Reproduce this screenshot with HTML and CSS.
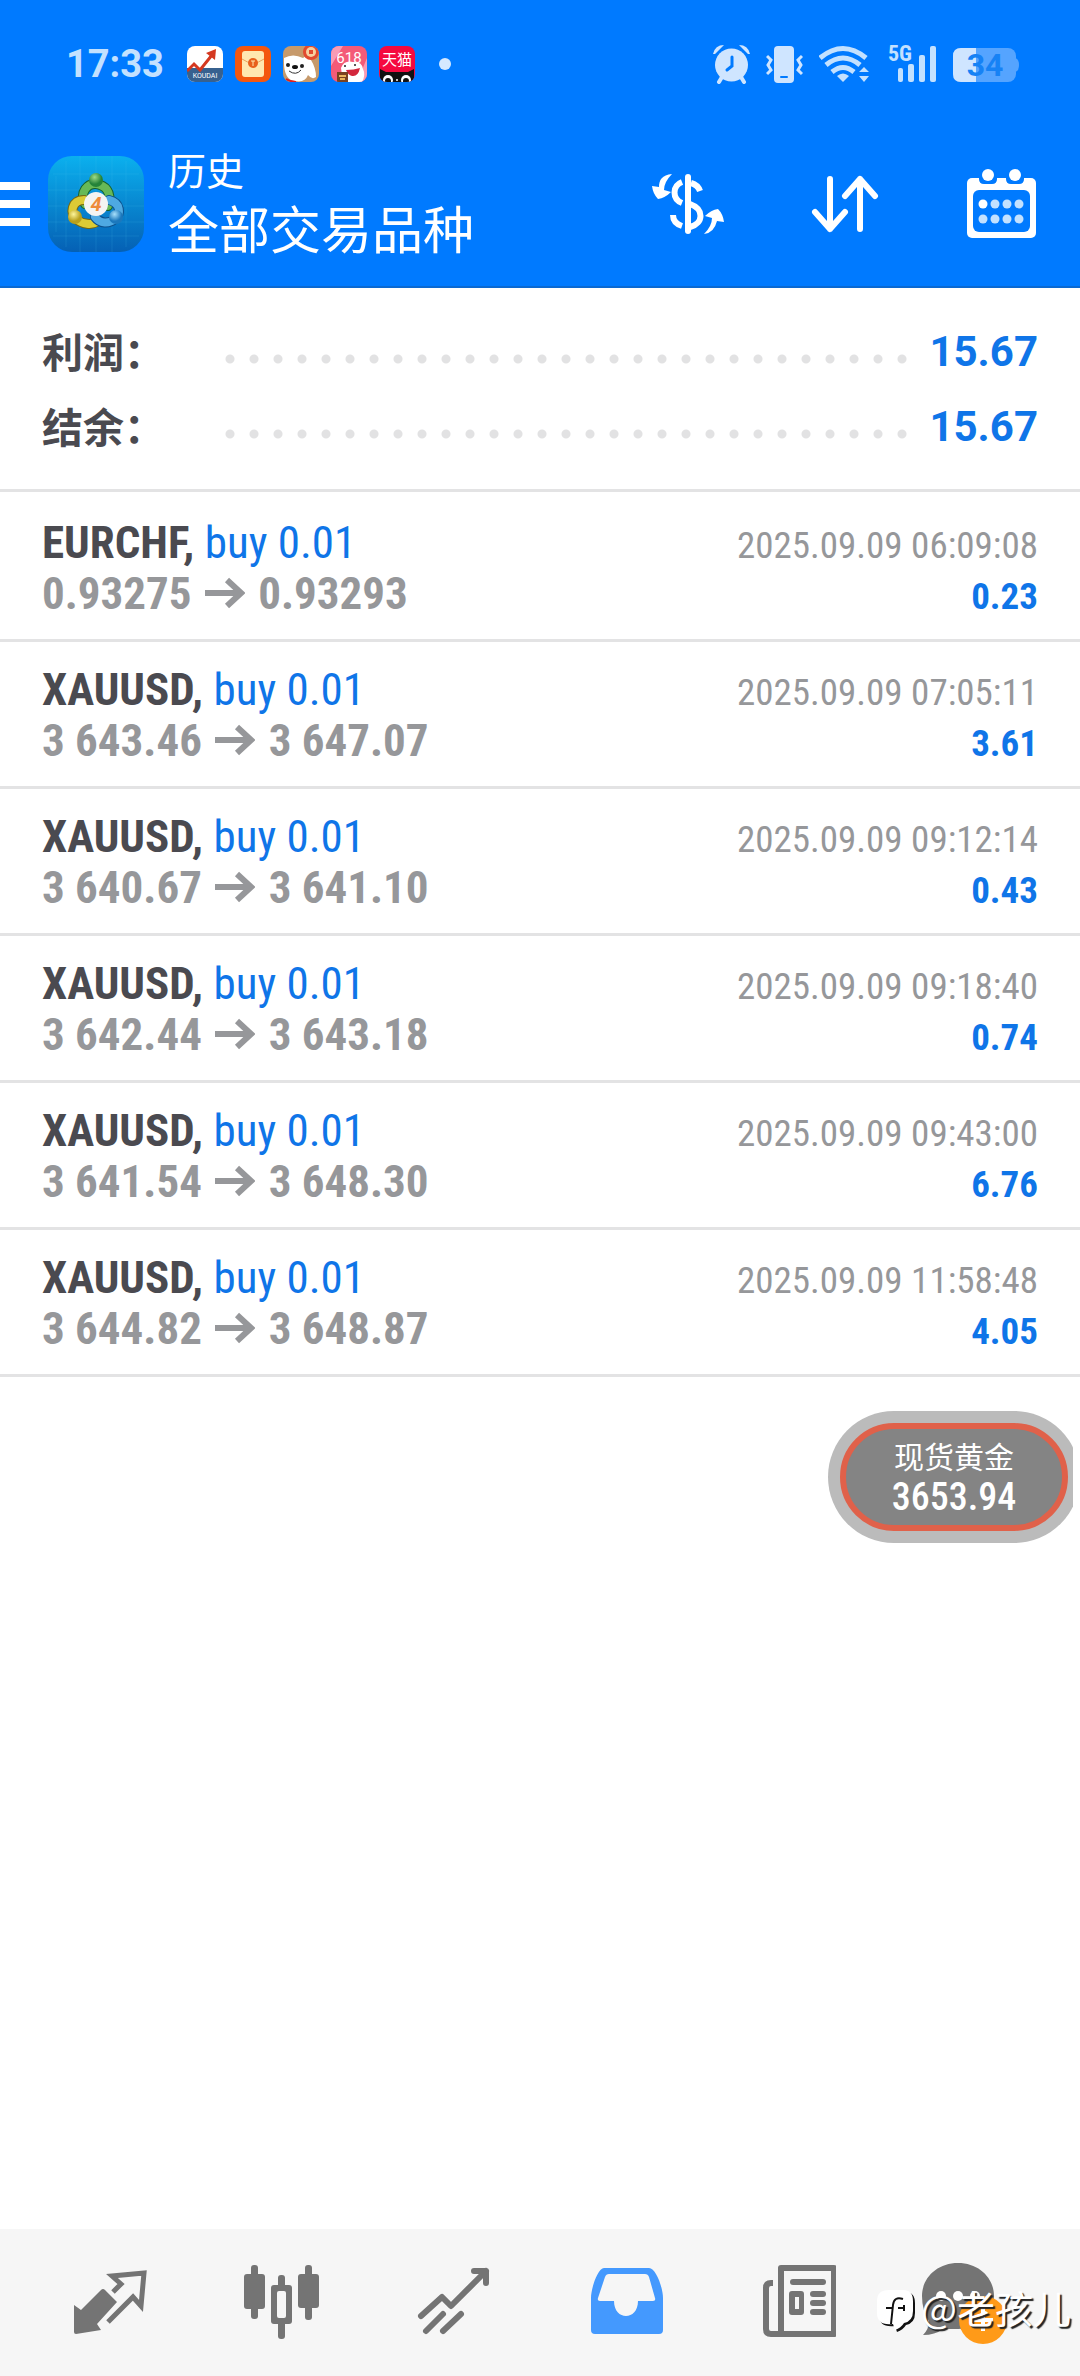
FILE: index.html
```
<!DOCTYPE html>
<html lang="zh-CN">
<head>
    <meta charset="UTF-8">
    <meta name="viewport" content="width=device-width, initial-scale=1.0">
    <title>历史</title>
    <link rel="stylesheet" href="styles.css">
</head>
<body>
    <header class="top">
        <div class="status-bar">
            <span class="clock">17:33</span>
            <div class="notifications">
                <svg width="36" height="36" viewBox="0 0 36 36">
                    <clipPath id="tile"><rect width="36" height="36" rx="8"/></clipPath>
                    <g clip-path="url(#tile)">
                        <rect width="36" height="36" fill="#fff"/>
                        <rect y="22" width="36" height="14" fill="#37618f"/>
                        <path d="M0 25l7-7 6 6 12-15" fill="none" stroke="#d43820" stroke-width="3"/>
                        <path d="M19 7l10-4-1 11z" fill="#d43820"/>
                        <text x="18" y="32" class="tile-brand">KOUDAI</text>
                    </g>
                </svg>
                <svg width="36" height="36" viewBox="0 0 36 36">
                    <rect width="36" height="36" rx="8" fill="#f4570f"/>
                    <rect x="7" y="5" width="22" height="26" rx="3" fill="#ffe7b0"/>
                    <path d="M7 13q11 8 22 0" fill="none" stroke="#e8a35c" stroke-width="1"/>
                    <circle cx="18" cy="17" r="5" fill="#e8601c"/>
                    <path d="M16 15h4M18 15v5" stroke="#ffe7b0" stroke-width="1"/>
                </svg>
                <svg width="36" height="36" viewBox="0 0 36 36">
                    <g clip-path="url(#tile)">
                        <rect width="36" height="36" fill="#c79a6b"/>
                        <path d="M1 12q9-5 19 0 4-4 8 2 5 8 5 17-4 3-8-2-3 8-13 6Q0 34 1 12z" fill="#fff"/>
                        <circle cx="28" cy="6" r="8" fill="#e24a30"/>
                        <circle cx="28" cy="6" r="5" fill="#f6cfa0"/>
                        <rect x="26" y="4" width="4" height="4" fill="#e24a30"/>
                        <circle cx="5" cy="19" r="2" fill="#222"/>
                        <circle cx="19" cy="20" r="2" fill="#222"/>
                        <ellipse cx="12" cy="21" rx="3" ry="2" fill="#111"/>
                        <path d="M6 25q7 5 12-1" fill="none" stroke="#333" stroke-width="1"/>
                        <path d="M3 33q5 3 10 3" stroke="#e02020" stroke-width="2" fill="none"/>
                    </g>
                </svg>
                <svg width="36" height="36" viewBox="0 0 36 36">
                    <g clip-path="url(#tile)">
                        <rect width="36" height="36" fill="#f45b78"/>
                        <path d="M0 20L12 0H0zM36 12L26 36H36z" fill="#f99bb4"/>
                        <text x="18" y="17" class="tile-sale">618</text>
                        <path d="M10 22q3-8 12-6 9-1 10 7 3 6-1 13H12z" fill="#fff"/>
                        <path d="M15 24q8 0 14-2-2 9-8 8-4-1-6-6z" fill="#d3273c"/>
                        <circle cx="14" cy="20" r="1" fill="#222"/>
                        <circle cx="24" cy="19" r="1" fill="#222"/>
                        <rect x="6" y="26" width="11" height="10" fill="#7a4221"/>
                        <path d="M8 30h7M9 33h5" stroke="#e9b45d" stroke-width="2"/>
                    </g>
                </svg>
                <svg width="36" height="36" viewBox="0 0 36 36">
                    <g clip-path="url(#tile)">
                        <rect width="36" height="36" fill="#f5093f"/>
                        <text x="18" y="19" class="tile-tmall">天猫</text>
                        <path d="M1 23l6 3h22l6-3v13H1z" fill="#111"/>
                        <circle cx="9" cy="34" r="5" fill="#fff"/>
                        <circle cx="27" cy="34" r="5" fill="#fff"/>
                        <circle cx="9" cy="35" r="3" fill="#111"/>
                        <circle cx="27" cy="35" r="3" fill="#111"/>
                        <circle cx="18" cy="34" r="1" fill="#fff"/>
                    </g>
                </svg>
            </div>
            <span class="more-dot"></span>

            <div class="system-icons">
                <svg width="37" height="40" viewBox="714 44 37 40" fill="#cfe5ff">
                    <circle cx="732.500" cy="65" r="16.500"/>
                    <path d="M714 54q2-9 11-9l-9 9zM751 54q-2-9-11-9l9 9z"/>
                    <path d="M723 77l-3 5M742 77l3 5" stroke="#cfe5ff" stroke-width="4" stroke-linecap="round"/>
                    <path d="M733 57v9l-5 4" fill="none" stroke="#007aff" stroke-width="3" stroke-linecap="round"/>
                </svg>
                <svg width="37" height="40" viewBox="769 44 37 40" fill="#cfe5ff">
                    <rect x="777" y="46" width="20" height="37" rx="4"/>
                    <path d="M784 77h6" stroke="#007aff" stroke-width="2" stroke-linecap="round"/>
                    <path d="M770 56l4 4-3 5 3 5-4 4M805 56l-4 4 3 5-3 5 4 4" fill="none" stroke="#cfe5ff" stroke-width="3"/>
                </svg>
                <svg width="51" height="40" viewBox="823 44 51 40" fill="none" stroke="#c3e1ff" stroke-width="5">
                    <path d="M824 58q23-19 46 0M830 65q17-14 34 0M836 72q11-9 22 0"/>
                    <path d="M841 76q6-5 12 0l-6 6z" fill="#c3e1ff" stroke="none"/>
                    <path d="M863 72l5-5 5 5zM863 76l5 6 5-6z" fill="#c3e1ff" stroke="none"/>
                </svg>
                <svg width="51" height="44" viewBox="885 42 51 44" fill="#c3e1ff">
                    <text x="887" y="61" class="net-label">5G</text>
                    <rect x="897" y="68" width="5" height="14" rx="2"/>
                    <rect x="907" y="64" width="6" height="18" rx="2"/>
                    <rect x="918" y="55" width="6" height="27" rx="2"/>
                    <rect x="929" y="46" width="6" height="36" rx="2"/>
                </svg>
                <svg width="66" height="40" viewBox="952 44 66 40">
                    <rect x="952" y="48" width="63" height="34" rx="8" fill="#55a4ff"/>
                    <path d="M1014 58q4 1 4 7t-4 7z" fill="#55a4ff"/>
                    <path d="M975 48v34h-15q-8 0-8-8v-18q0-8 8-8z" fill="#cfe5ff"/>
                    <text x="984" y="76" class="battery-label">34</text>
                </svg>
            </div>
        </div>

        <div class="title-bar">
            <button class="menu-btn" aria-label="菜单"><span></span><span></span><span></span></button>
            <svg class="app-icon" width="96" height="96" viewBox="0 0 96 96">
                <defs>
                    <linearGradient id="sky" x1="0" y1="0" x2="0" y2="1">
                        <stop offset="0" stop-color="#0bb0ee"/>
                        <stop offset="1" stop-color="#0560b4"/>
                    </linearGradient>
                    <radialGradient id="green" cx=".4" cy=".3"><stop offset="0" stop-color="#9fdc86"/><stop offset="1" stop-color="#258339"/></radialGradient>
                    <radialGradient id="gold" cx=".4" cy=".3"><stop offset="0" stop-color="#fdf59a"/><stop offset="1" stop-color="#b9a01c"/></radialGradient>
                    <radialGradient id="azure" cx=".4" cy=".3"><stop offset="0" stop-color="#a8e0fb"/><stop offset="1" stop-color="#1b78bd"/></radialGradient>
                </defs>
                <rect width="96" height="96" rx="24" fill="url(#sky)"/>
                <path d="M8 20v56M18 5v86M32 0v96M48 0v96M64 0v96M78 5v86M5 18h86M0 34h96M0 50h96M0 66h96M5 80h86" stroke="#5ac8f5" stroke-opacity=".15"/>
                <g fill="none" stroke-linecap="round">
                    <path d="M37 48C31 36 40 27 48 28s17 7 12 22" stroke="#17612c" stroke-width="10"/>
                    <path d="M37 48C31 36 40 27 48 28s17 7 12 22" stroke="#67b957" stroke-width="8"/>
                    <path d="M36 44C23 44 22 58 28 63s16 7 22 2" stroke="#766712" stroke-width="10"/>
                    <path d="M36 44C23 44 22 58 28 63s16 7 22 2" stroke="#dccb35" stroke-width="8"/>
                    <path d="M61 44c12 3 12 14 6 19s-15 5-20-2" stroke="#0c508c" stroke-width="10"/>
                    <path d="M61 44c12 3 12 14 6 19s-15 5-20-2" stroke="#4ea9e2" stroke-width="8"/>
                </g>
                <circle cx="48" cy="24" r="7" fill="url(#green)"/>
                <circle cx="27" cy="61" r="7" fill="url(#gold)"/>
                <circle cx="68" cy="61" r="7" fill="url(#azure)"/>
                <circle cx="48" cy="48" r="12" fill="#f4f4f2"/>
                <text x="48" y="55" class="app-number">4</text>
            </svg>
            <div class="titles">
                <h1>历史</h1>
                <p>全部交易品种</p>
            </div>
            <button class="action" aria-label="货币">
                <svg width="72" height="62" viewBox="654 174 72 62" fill="none" stroke="#fff" stroke-width="6">
                    <path d="M674 175C664 176 661 181 661 188L654 187Q655 195 660 200Q667 199 673 193L666 191Q666 183 674 175z" fill="#fff" stroke="none"/>
                    <path d="M726 223Q725 215 720 210Q713 211 707 217L714 219Q714 227 706 235Q716 234 719 222z" fill="#fff" stroke="none"/>
                    <path d="M690 178v54" stroke-linecap="round"/>
                    <path d="M684 183c-10 4-10 17 0 21"/>
                    <path d="M693 184q7 2 9 8M675 216q0 8 9 11"/>
                    <path d="M692 205c14 5 14 19 0 23"/>
                </svg>
            </button>
            <button class="action" aria-label="排序">
                <svg width="68" height="62" viewBox="812 174 68 62" fill="none" stroke="#fff" stroke-width="6" stroke-linecap="round" stroke-linejoin="round">
                    <path d="M831 180v50M816 213l15 17 15-17M861 230v-50M846 197l15-17 15 17"/>
                </svg>
            </button>
            <button class="action" aria-label="日期">
                <svg width="70" height="72" viewBox="966 168 70 72" fill="#fff">
                    <rect x="966" y="178" width="69" height="60" rx="5"/>
                    <rect x="972" y="190" width="57" height="42" rx="6" fill="#007aff"/>
                    <path d="M978 174v5q0 5 5 5h8q5 0 5-5v-5zM1005 174v5q0 5 5 5h8q5 0 5-5v-5z" fill="#007aff"/>
                    <circle cx="987" cy="175" r="6"/>
                    <circle cx="1014" cy="175" r="6"/>
                    <circle cx="982" cy="204" r="4.500"/>
                    <g fill="#c3e1ff">
                        <circle cx="994" cy="204" r="4.500"/><circle cx="1006" cy="204" r="4.500"/><circle cx="1018" cy="204" r="4.500"/>
                        <circle cx="982" cy="219" r="4.500"/><circle cx="994" cy="219" r="4.500"/><circle cx="1006" cy="219" r="4.500"/><circle cx="1018" cy="219" r="4.500"/>
                    </g>
                </svg>
            </button>
        </div>
    </header>

    <main>
        <dl class="summary">
            <div class="summary-row"><dt>利润：</dt><dd>15.67</dd></div>
            <div class="summary-row"><dt>结余：</dt><dd>15.67</dd></div>
        </dl>

        <ul class="deals">
            <li class="deal">
                <div class="deal-line"><span class="name"><b>EURCHF,</b> buy 0.01</span><time>2025.09.09 06:09:08</time></div>
                <div class="deal-line"><span class="prices">0.93275 <svg class="arrow" viewBox="0 0 40 32"><path d="M0 16h36M22 3l14 13-14 13"/></svg> 0.93293</span><span class="profit">0.23</span></div>
            </li>
            <li class="deal">
                <div class="deal-line"><span class="name"><b>XAUUSD,</b> buy 0.01</span><time>2025.09.09 07:05:11</time></div>
                <div class="deal-line"><span class="prices">3 643.46 <svg class="arrow" viewBox="0 0 40 32"><path d="M0 16h36M22 3l14 13-14 13"/></svg> 3 647.07</span><span class="profit">3.61</span></div>
            </li>
            <li class="deal">
                <div class="deal-line"><span class="name"><b>XAUUSD,</b> buy 0.01</span><time>2025.09.09 09:12:14</time></div>
                <div class="deal-line"><span class="prices">3 640.67 <svg class="arrow" viewBox="0 0 40 32"><path d="M0 16h36M22 3l14 13-14 13"/></svg> 3 641.10</span><span class="profit">0.43</span></div>
            </li>
            <li class="deal">
                <div class="deal-line"><span class="name"><b>XAUUSD,</b> buy 0.01</span><time>2025.09.09 09:18:40</time></div>
                <div class="deal-line"><span class="prices">3 642.44 <svg class="arrow" viewBox="0 0 40 32"><path d="M0 16h36M22 3l14 13-14 13"/></svg> 3 643.18</span><span class="profit">0.74</span></div>
            </li>
            <li class="deal">
                <div class="deal-line"><span class="name"><b>XAUUSD,</b> buy 0.01</span><time>2025.09.09 09:43:00</time></div>
                <div class="deal-line"><span class="prices">3 641.54 <svg class="arrow" viewBox="0 0 40 32"><path d="M0 16h36M22 3l14 13-14 13"/></svg> 3 648.30</span><span class="profit">6.76</span></div>
            </li>
            <li class="deal">
                <div class="deal-line"><span class="name"><b>XAUUSD,</b> buy 0.01</span><time>2025.09.09 11:58:48</time></div>
                <div class="deal-line"><span class="prices">3 644.82 <svg class="arrow" viewBox="0 0 40 32"><path d="M0 16h36M22 3l14 13-14 13"/></svg> 3 648.87</span><span class="profit">4.05</span></div>
            </li>
        </ul>
    </main>

    <!-- floating quote widget -->
    <div class="quote">
        <div class="quote-ring">
            <div class="quote-body">
                <span class="quote-name">现货黄金</span>
                <span class="quote-price">3653.94</span>
            </div>
        </div>
    </div>

    <nav class="tabs">
        <a href="#quotes" aria-label="行情">
            <svg width="76" height="78" viewBox="72 2262 76 78">
                <path d="M74 2305l7 5 20-20q2-2 4 0l12 12-20 22 4 6-25 4q-2 0-2-2z" fill="#747474"/>
                <path d="M113 2292l8-8-9-8 32-3-3 33-8-9-25 25" fill="none" stroke="#747474" stroke-width="5"/>
            </svg>
        </a>
        <a href="#chart" aria-label="图表">
            <svg width="76" height="78" viewBox="244 2262 76 78" fill="#747474">
                <rect x="244" y="2274" width="21" height="35" rx="3"/>
                <rect x="251" y="2265" width="7" height="54" rx="3"/>
                <rect x="298" y="2274" width="21" height="34" rx="3"/>
                <rect x="305" y="2265" width="7" height="55" rx="3"/>
                <rect x="278" y="2275" width="7" height="64" rx="3"/>
                <rect x="271" y="2285" width="21" height="39" rx="3"/>
                <rect x="277" y="2291" width="9" height="27" rx="2" fill="#f6f6f6"/>
            </svg>
        </a>
        <a href="#trade" aria-label="交易">
            <svg width="76" height="78" viewBox="416 2262 76 78" fill="none" stroke="#747474" stroke-width="6" stroke-linecap="round" stroke-linejoin="round">
                <path d="M421 2316l21-19 9 9 35-35M474 2271h12v12"/>
                <path d="M426 2331l17-17M443 2331l18-17"/>
            </svg>
        </a>
        <a href="#history" class="active" aria-label="历史">
            <svg width="76" height="78" viewBox="588 2262 76 78" fill="#4499fe">
                <path fill-rule="evenodd" d="M604 2268H649C656 2268 663 2288 663 2298V2330q0 4-4 4H595q-4 0-4-4V2298C591 2288 598 2268 604 2268zM609 2274q-3 0-4 3L598 2298q-1 3 2 3H614c0 20 24 20 24 0H653q3 0 2-3L649 2277q-1-3-4-3z"/>
            </svg>
        </a>
        <a href="#news" aria-label="新闻">
            <svg width="76" height="78" viewBox="760 2262 76 78" fill="#747474">
                <path d="M773 2283h-2q-5 0-5 5v41q0 5 5 5h10M781 2268h53v66h-53z" fill="none" stroke="#747474" stroke-width="6" stroke-linejoin="round"/>
                <rect x="790" y="2279" width="36" height="6" rx="3"/>
                <path fill-rule="evenodd" d="M792 2291h9q3 0 3 3v18q0 3-3 3h-9q-3 0-3-3v-18q0-3 3-3zM795 2297v12h4v-12z"/>
                <rect x="810" y="2291" width="16" height="6" rx="3"/>
                <rect x="810" y="2300" width="16" height="6" rx="3"/>
                <rect x="810" y="2309" width="16" height="6" rx="3"/>
            </svg>
        </a>
        <a href="#messages" aria-label="消息">
            <svg width="96" height="90" viewBox="922 2258 96 90">
                <path d="M958 2265c21 0 36 15 36 33s-15 33-36 33h-15q-8 6-20 6 6-6 6-14-7-10-7-25c0-18 15-33 36-33z" fill="#747474"/>
                <circle cx="941" cy="2298" r="5" fill="#fff"/><circle cx="958" cy="2298" r="5" fill="#fff"/><circle cx="975" cy="2298" r="5" fill="#fff"/>
                <circle cx="983" cy="2322" r="24" fill="#ff9a18"/>
                <path d="M983 2310v23M973 2322h20" stroke="#fff" stroke-width="4"/>
            </svg>
        </a>
    </nav>

    <div class="watermark">
        <svg width="40" height="48" viewBox="0 0 40 48">
            <path d="M14 6h14q10 0 10 11v10q0 10-9 12-3 5-9 7l-2-6Q2 42 2 29V17Q2 6 14 6z" fill="#111"/>
            <path d="M12 4h14q10 0 10 11v10q0 10-9 12-3 5-9 7l-2-6Q0 40 0 27V15Q0 4 12 4z" fill="#fff"/>
            <path d="M26 13q-9-3-10 6l-2 19M9 22h7M21 22h6M27 19v6" fill="none" stroke="#111" stroke-width="2"/>
        </svg>
        <span>@老孩儿</span>
    </div>
</body>
</html>
```
FILE: styles.css
```
* {
    box-sizing: border-box;
}
body {
    margin: 0;
    min-height: 100vh;
    display: flex;
    flex-direction: column;
    position: relative;
    background: #fff;
    color: #4a4a50;
    font-family: Roboto, "Noto Sans CJK SC", sans-serif;
}
svg {
    display: block;
    flex: none;
}
h1, p, dl, dd, ul {
    margin: 0;
    padding: 0;
}
button {
    border: 0;
    padding: 0;
    background: none;
    cursor: pointer;
}

/* header */
.top {
    background: #007aff;
    border-bottom: 2px solid #0a69d2;
    color: #fff;
}
.status-bar {
    display: flex;
    align-items: center;
    height: 128px;
    padding: 0 61px 0 66px;
}
.clock {
    width: 121px;
    color: #c3e1ff;
    font-size: 38px;
    font-weight: 700;
}
.notifications {
    display: flex;
    gap: 12px;
}
.more-dot {
    width: 12px;
    height: 12px;
    margin-left: 24px;
    border-radius: 50%;
    background: #d5e9ff;
}
.system-icons {
    display: flex;
    align-items: center;
    gap: 16px;
    margin-left: auto;
}
.tile-brand {
    fill: #fff;
    font-size: 7px;
    text-anchor: middle;
}
.tile-sale {
    fill: #fff;
    font-size: 15px;
    text-anchor: middle;
}
.tile-tmall {
    fill: #fff;
    font-size: 15px;
    text-anchor: middle;
}
.net-label {
    font-size: 22px;
    font-weight: 700;
    font-family: "Roboto Condensed", sans-serif;
}
.battery-label {
    fill: #1682f5;
    font-size: 32px;
    font-weight: 700;
    text-anchor: middle;
}
.title-bar {
    display: flex;
    align-items: center;
    height: 158px;
    padding-bottom: 6px;
}
.menu-btn {
    display: flex;
    flex-direction: column;
    gap: 10px;
    width: 48px;
}
.menu-btn span {
    width: 30px;
    height: 8px;
    background: #fff;
}
.titles {
    flex: 1;
    padding-left: 24px;
}
.titles h1 {
    font-size: 38px;
    font-weight: 400;
    line-height: 56px;
}
.titles p {
    font-size: 51px;
    line-height: 64px;
}
.action {
    display: flex;
    justify-content: center;
    align-items: center;
    width: 157px;
    height: 120px;
}
.app-number {
    fill: #ee8b3a;
    font-size: 20px;
    font-weight: 700;
    font-style: italic;
    text-anchor: middle;
}

/* totals */
main {
    flex: 1;
}
.summary {
    padding: 26px 42px 25px;
    border-bottom: 3px solid #e3e3e4;
}
.summary-row {
    display: flex;
    align-items: center;
    height: 75px;
    font-weight: 700;
}
.summary-row dt {
    width: 176px;
    padding-bottom: 4px;
    font-size: 41px;
}
.summary-row dd {
    flex: 1;
    color: #0f75e8;
    font-size: 42px;
    text-align: right;
    display: flex;
    align-items: center;
    justify-content: space-between;
}
.summary-row dd::before {
    content: "";
    width: 696px;
    height: 10px;
    margin-top: 14px;
    background: radial-gradient(circle at 12px 5px, #e2e2e3 4px, transparent 5px) 0 0 / 24px 10px;
}

/* deals */
.deals {
    list-style: none;
    padding-top: 3px;
}
.deal {
    height: 147px;
    padding: 22px 42px 0;
    border-bottom: 3px solid #e3e3e4;
    font-family: "Roboto Condensed", sans-serif;
}
.deal-line {
    display: flex;
    align-items: baseline;
    justify-content: space-between;
    height: 51px;
    line-height: 52px;
}
.name {
    color: #0f75e8;
    font-size: 45px;
}
.name b {
    color: #4a4a50;
}
.prices {
    color: #96979a;
    font-size: 45px;
    font-weight: 700;
}
.arrow {
    display: inline-block;
    width: 40px;
    height: 32px;
    margin: 0 3px;
    fill: none;
    stroke: #96979a;
    stroke-width: 6;
}
time {
    color: #96979a;
    font-size: 37px;
}
.profit {
    color: #0f75e8;
    font-size: 37px;
    font-weight: 700;
}

/* floating quote, cut off at its right edge */
.quote {
    position: absolute;
    top: 1411px;
    right: 7px;
    width: 245px;
    overflow: hidden;
    color: #fff;
}
.quote-ring {
    width: 252px;
    padding: 12px;
    border-radius: 66px;
    background: #bbb;
}
.quote-body {
    display: flex;
    flex-direction: column;
    align-items: center;
    height: 108px;
    padding-top: 10px;
    border: 6px solid #e0614a;
    border-radius: 54px;
    background: #848484;
}
.quote-name {
    font-size: 30px;
    line-height: 38px;
}
.quote-price {
    font-size: 38px;
    font-weight: 500;
    line-height: 40px;
    font-family: "Roboto Condensed", sans-serif;
}

/* bottom tabs */
.tabs {
    display: flex;
    height: 147px;
    padding: 0 24px 4px;
    background: #f6f6f6;
}
.tabs a {
    flex: 1;
    display: flex;
    justify-content: center;
    align-items: center;
}
.watermark {
    position: absolute;
    right: 9px;
    bottom: 36px;
    display: flex;
    align-items: center;
    gap: 4px;
    color: #fff;
    font-size: 38px;
    font-family: "Noto Sans CJK SC", sans-serif;
    text-shadow: 2px 2px 1px #222;
}
.watermark span {
    padding-bottom: 6px;
}
```
